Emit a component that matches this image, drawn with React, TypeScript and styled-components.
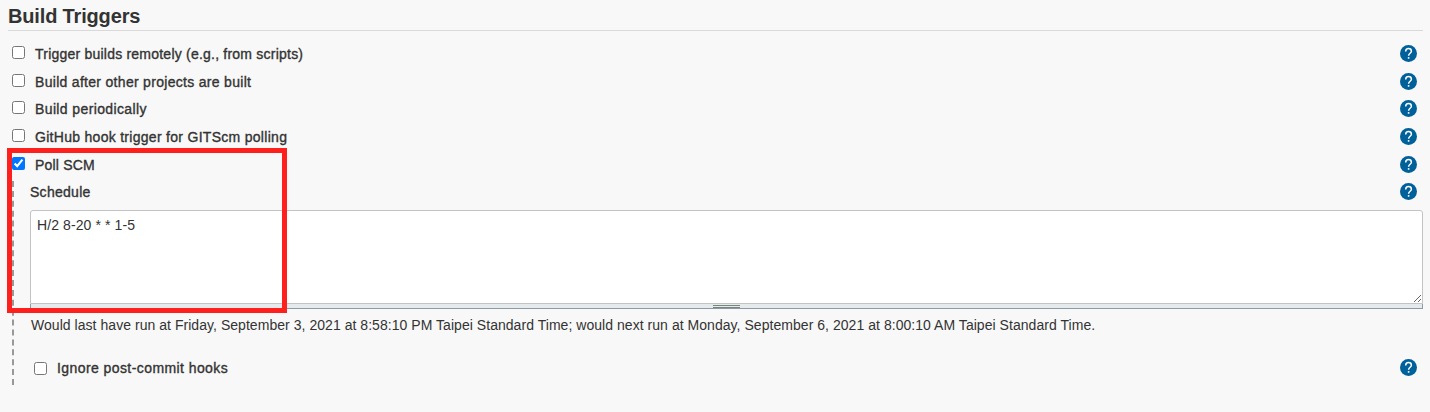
import React from "react";
import styled, { createGlobalStyle } from "styled-components";

const GlobalStyle = createGlobalStyle`
  * { box-sizing: border-box; }
  html, body { margin: 0; background: #f8f8f8; }
  body {
    height: 412px;
    overflow: hidden;
    font-family: "Liberation Sans", Arial, sans-serif;
    font-size: 14px;
    color: #333;
  }
`;

const Page = styled.main`
  position: relative;
  padding: 0 7px 0 8px;
`;

const Heading = styled.h2`
  margin: 0 0 9px;
  height: 31px;
  border-bottom: 1px solid #d9d9d9;
  font-size: 20px;
  font-weight: 700;
  line-height: 32px;
  letter-spacing: -0.16px;
`;

const Row = styled.div<{ $h?: number }>`
  display: flex;
  align-items: flex-start;
  height: ${(p) => p.$h ?? 28}px;
  padding: 6px 6px 0 4px;
`;

const Check = styled.input<{ $drop?: number }>`
  width: 13px;
  height: 13px;
  margin: ${(p) => p.$drop ?? 0}px 10px 0 0;
`;

const Label = styled.label<{ $track?: number }>`
  flex: 1;
  line-height: 16px;
  white-space: nowrap;
  letter-spacing: ${(p) => p.$track ?? 0}px;
  -webkit-text-stroke: 0.35px #333;
`;

const HelpIcon = styled.svg`
  display: block;
  width: 17px;
  height: 17px;
  margin-top: -1px;
`;

const Nested = styled.section`
  margin: 1px 0 0 4px;
  height: 204px;
  border-left: 2px dashed #999;
  padding-left: 16px;
`;

const ScheduleRow = styled(Row)`
  height: 29px;
  padding: 3px 6px 0 0;
`;

const Schedule = styled.textarea`
  display: block;
  width: 100%;
  height: 94px;
  margin: 0;
  padding: 5px 6px 6px;
  border: 1px solid #c3c3c3;
  border-radius: 3px 3px 0 0;
  background: #fff;
  color: #333;
  font: inherit;
  line-height: 18px;
  letter-spacing: 0.1px;
  resize: vertical;
  outline: none;
`;

const Handle = styled.div`
  display: flex;
  justify-content: center;
  height: 5px;
  border: solid #8a9ba3;
  border-width: 0 1px 1px;
  background: #e5eaed;
`;

const Grip = styled.span`
  width: 27px;
  height: 3px;
  margin-top: 1px;
  border: solid #78857d;
  border-width: 1px 0;
`;

const Message = styled.p`
  margin: 0;
  padding: 8px 0 0 1px;
  height: 45px;
  line-height: 16px;
  letter-spacing: 0.043px;
  white-space: nowrap;
`;

const Highlight = styled.div`
  position: absolute;
  left: 7px;
  top: 148px;
  width: 280px;
  height: 165px;
  border: 5px solid #ff1f1c;
  pointer-events: none;
`;

const Help = () => (
  <HelpIcon viewBox="0 0 17 17" role="img" aria-label="Help">
    <circle cx="8.5" cy="8.5" r="8.5" fill="#00609a" />
    <path
      d="M5.7 6.4C5.7 4.5 6.8 3.6 8.5 3.6S11.4 4.6 11.4 6.2C11.4 8.3 8.6 8.3 8.6 10.8"
      fill="none"
      stroke="#fff"
      strokeWidth="1.5"
    />
    <rect x="7.8" y="12.1" width="1.6" height="1.6" fill="#fff" />
  </HelpIcon>
);

const triggers = [
  { id: "remote", label: "Trigger builds remotely (e.g., from scripts)", h: 28, track: 0.22 },
  { id: "after", label: "Build after other projects are built", h: 27, track: 0.3 },
  { id: "periodic", label: "Build periodically", h: 28, track: 0.38 },
  { id: "github", label: "GitHub hook trigger for GITScm polling", h: 28, track: 0.29 },
  { id: "poll", label: "Poll SCM", h: 29, track: 0.2, checked: true },
];

export default function App() {
  return (
    <>
      <GlobalStyle />
      <Page>
        <Heading>Build Triggers</Heading>
        {triggers.map((t) => (
          <Row key={t.id} $h={t.h}>
            <Check type="checkbox" id={t.id} defaultChecked={t.checked} />
            <Label htmlFor={t.id} $track={t.track}>{t.label}</Label>
            <Help />
          </Row>
        ))}
        <Nested>
          <ScheduleRow>
            <Label htmlFor="schedule" $track={0.28}>Schedule</Label>
            <Help />
          </ScheduleRow>
          <Schedule id="schedule" defaultValue="H/2 8-20 * * 1-5" spellCheck={false} />
          <Handle><Grip /></Handle>
          <Message>
            Would last have run at Friday, September 3, 2021 at 8:58:10 PM Taipei Standard Time; would next run at Monday, September 6, 2021 at 8:00:10 AM Taipei Standard Time.
          </Message>
          <Row>
            <Check type="checkbox" id="ignore" $drop={2} />
            <Label htmlFor="ignore" $track={0.42}>Ignore post-commit hooks</Label>
            <Help />
          </Row>
        </Nested>
        <Highlight />
      </Page>
    </>
  );
}
